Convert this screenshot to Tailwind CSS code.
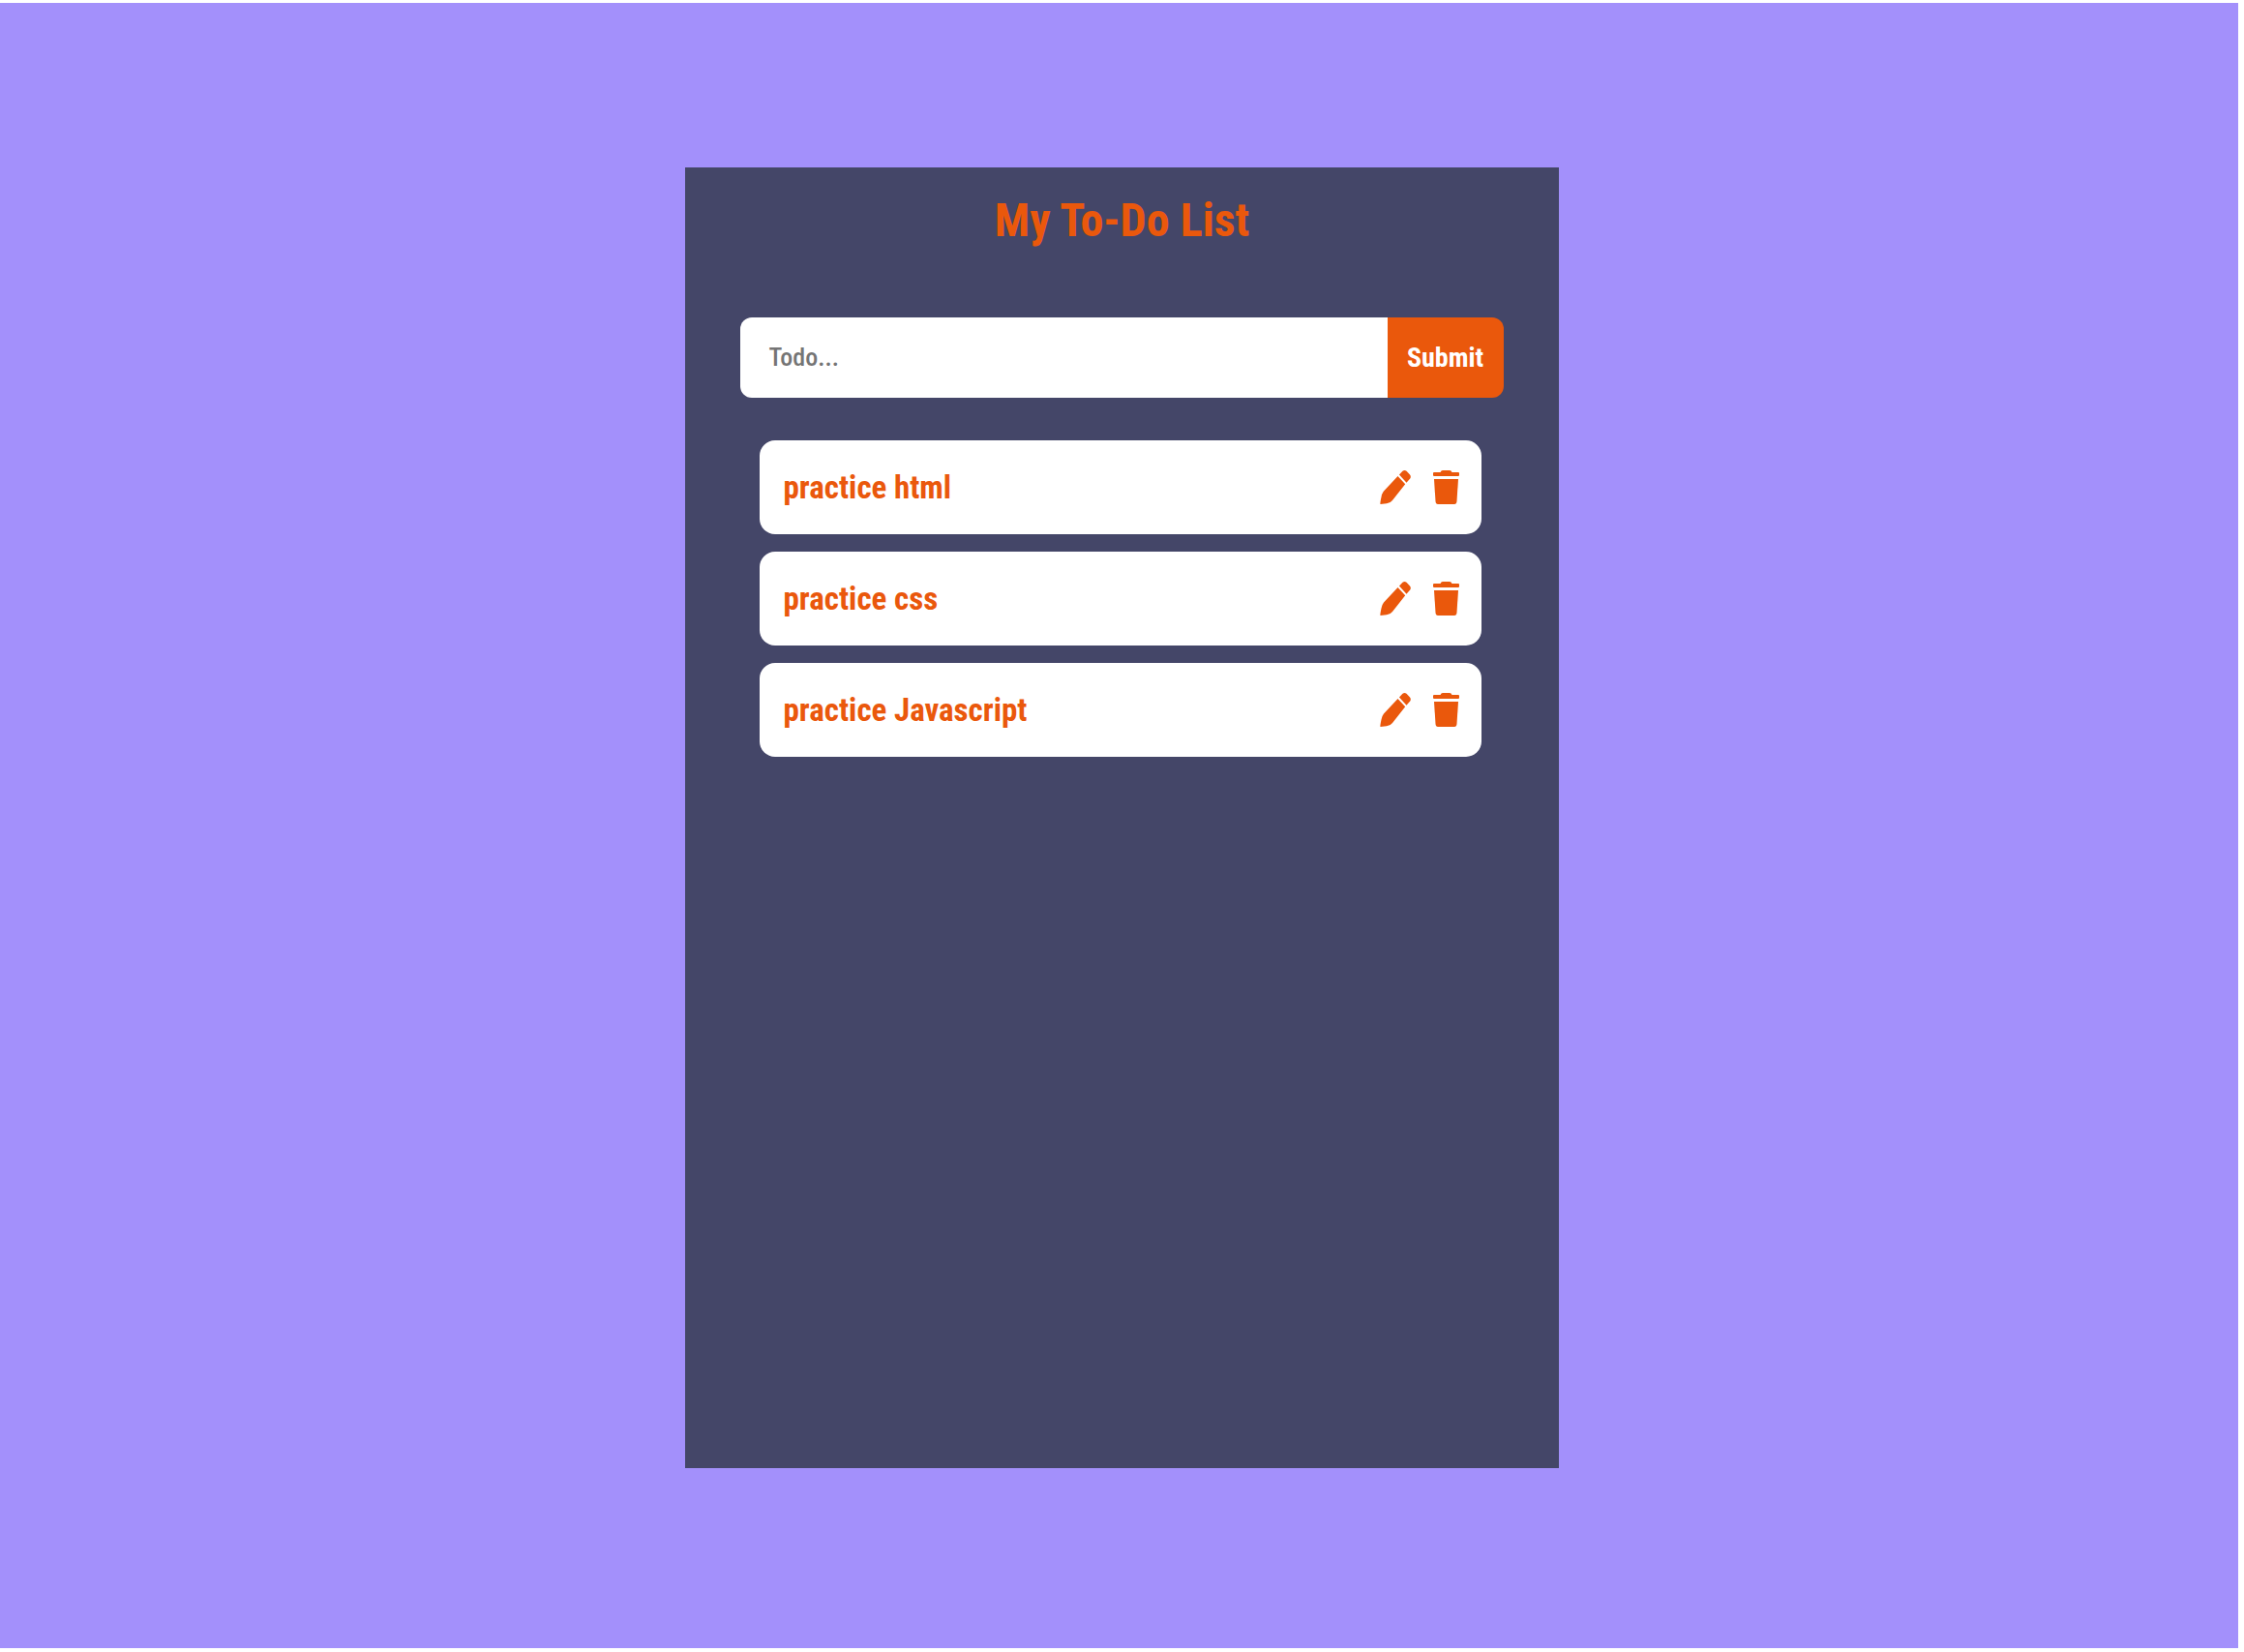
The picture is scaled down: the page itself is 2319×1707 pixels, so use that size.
<!DOCTYPE html>
<html lang="en">
<head>
<meta charset="utf-8">
<meta name="viewport" content="width=device-width, initial-scale=1">
<title>My To-Do List</title>
<script src="https://cdn.jsdelivr.net/npm/@tailwindcss/browser@4"></script>
</head>
<body class="flex min-h-screen flex-col bg-white pt-[3px] pr-[6px] pb-1 font-['Roboto_Condensed',Roboto,sans-serif]">
  <svg class="hidden" aria-hidden="true">
    <symbol id="pen" viewBox="0 0 32 35" preserveAspectRatio="none">
      <path d="M20 4.500 L23.500 .8 Q25.500 -.6 27.500 .8 L31 4.500 Q32.500 6.500 31.200 8.500 L27.500 12.700 Z"/>
      <path d="M18.500 6 L26.200 14.200 L13 31 Q11 33.800 7 34.300 L.5 35 Q0 34.500 1.500 27.500 Q2 24 4 21.500 Z"/>
    </symbol>
    <symbol id="trash" viewBox="0 0 27 35" preserveAspectRatio="none">
      <path d="M7.500 2 L8.500 .6 Q9 0 10 0 H17 Q18 0 18.500 .6 L19.500 2 H26 Q27 2 27 3 V5 Q27 6 26 6 H1 Q0 6 0 5 V3 Q0 2 1 2 Z"/>
      <path d="M1 9 H26 L24.500 32 Q24.300 35 22 35 H5 Q2.700 35 2.500 32 Z"/>
    </symbol>
  </svg>
  <div class="flex grow justify-center bg-[#a390fb] pt-[170px] pb-[186px] pl-[6px]">
    <main class="flex w-[39.1%] flex-col bg-[#444668] px-[57px]">
      <h1 class="mt-[23px] text-center text-[48px] leading-[64px] font-bold text-[#ea580c]">My To-Do List</h1>
      <form class="mt-[68px] flex h-[83px]" onsubmit="return false">
        <input type="text" aria-label="Todo" placeholder="Todo..." class="min-w-0 grow rounded-l-xl bg-white px-[29px] text-[26px] font-medium text-gray-900 outline-none placeholder:text-[#757575]">
        <button type="submit" class="w-[120px] rounded-r-xl bg-[#ea580c] text-[28px] font-bold text-white">Submit</button>
      </form>
      <ul class="mt-11 mr-[23px] ml-5 flex flex-col gap-[18px] text-[33px] font-bold text-[#ea580c]">
        <li class="flex h-[97px] items-center rounded-2xl bg-white pr-[23px] pl-6">
          <span class="grow">practice html</span>
          <button type="button" aria-label="Edit practice html"><svg class="h-[35px] w-8 fill-current"><use href="#pen"/></svg></button>
          <button type="button" aria-label="Delete practice html" class="ml-[23px]"><svg class="h-[35px] w-[27px] fill-current"><use href="#trash"/></svg></button>
        </li>
        <li class="flex h-[97px] items-center rounded-2xl bg-white pr-[23px] pl-6">
          <span class="grow">practice css</span>
          <button type="button" aria-label="Edit practice css"><svg class="h-[35px] w-8 fill-current"><use href="#pen"/></svg></button>
          <button type="button" aria-label="Delete practice css" class="ml-[23px]"><svg class="h-[35px] w-[27px] fill-current"><use href="#trash"/></svg></button>
        </li>
        <li class="flex h-[97px] items-center rounded-2xl bg-white pr-[23px] pl-6">
          <span class="grow">practice Javascript</span>
          <button type="button" aria-label="Edit practice Javascript"><svg class="h-[35px] w-8 fill-current"><use href="#pen"/></svg></button>
          <button type="button" aria-label="Delete practice Javascript" class="ml-[23px]"><svg class="h-[35px] w-[27px] fill-current"><use href="#trash"/></svg></button>
        </li>
      </ul>
    </main>
  </div>
</body>
</html>
